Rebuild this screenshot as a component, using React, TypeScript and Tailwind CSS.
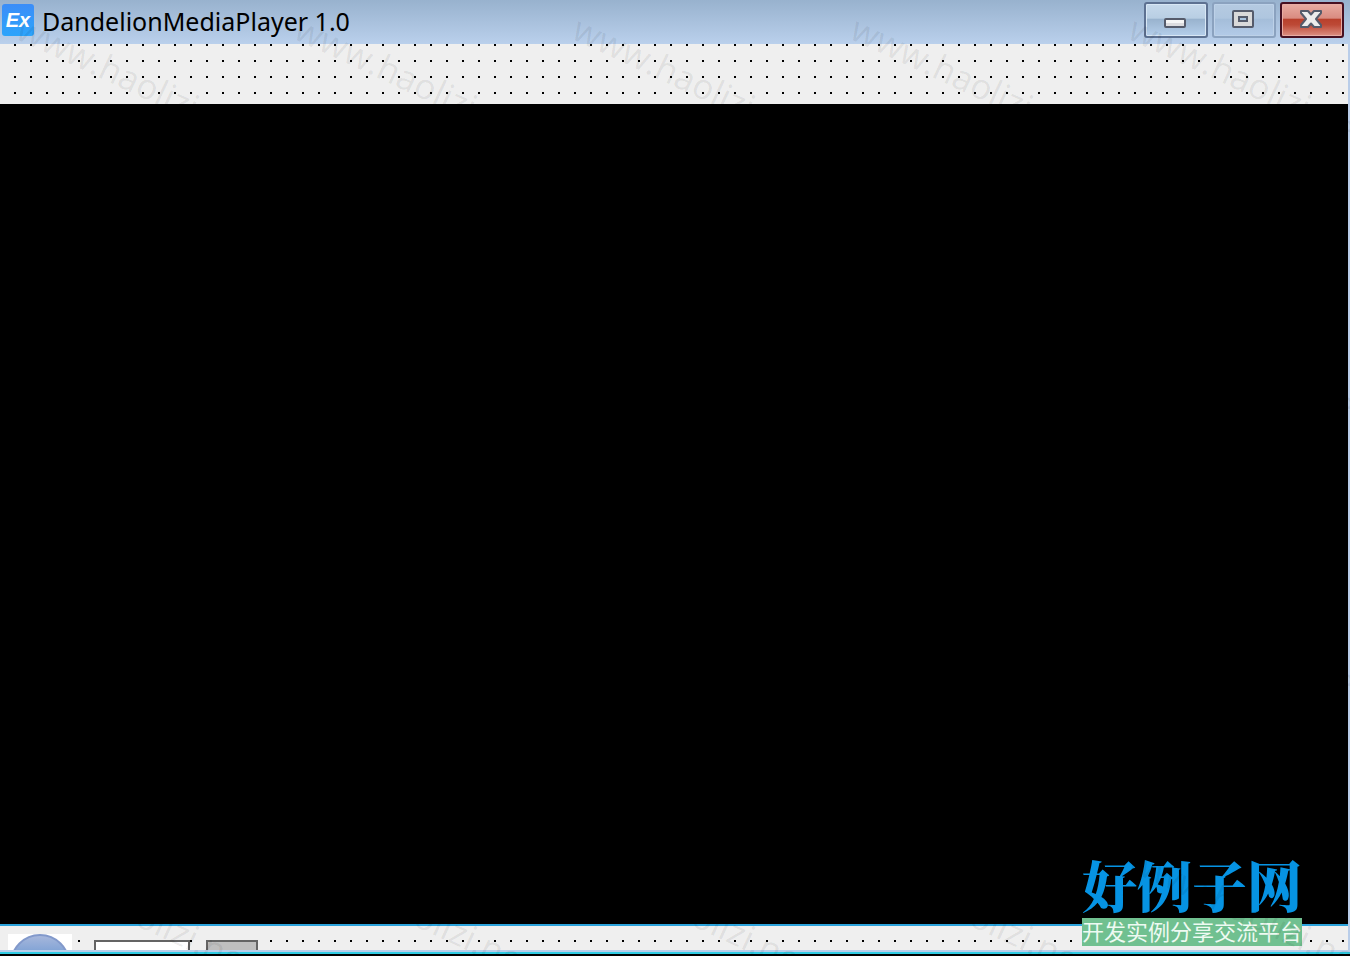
import React from "react";

function DotGrid({ y }: { y: number }) {
  return (
    <svg className="absolute inset-0 h-full w-full" aria-hidden="true" shapeRendering="crispEdges">
      <defs>
        <pattern id={`dots-${y}`} x="14" y={y} width="16" height="16" patternUnits="userSpaceOnUse">
          <rect width="2" height="2" fill="#000" />
        </pattern>
      </defs>
      <rect width="100%" height="100%" fill={`url(#dots-${y})`} />
    </svg>
  );
}

function AppIcon() {
  return (
    <span className="flex size-8 shrink-0 items-center justify-center rounded-[3px] bg-linear-to-b from-[#3b8df8] to-[#2ba4fb] font-['Liberation_Sans',sans-serif] text-[20px] leading-8 font-bold text-white italic">
      Ex
    </span>
  );
}

function TitleBar() {
  return (
    <header className="flex h-11 shrink-0 items-start justify-between bg-linear-to-b from-[#98b2ce] to-[#bad0ec] pr-1.5 pl-0.5">
      <div className="flex items-start gap-2 pt-1">
        <AppIcon />
        <h1 className="font-['Noto_Sans','Open_Sans',sans-serif] text-[25px] leading-[34px] whitespace-nowrap text-black">
          DandelionMediaPlayer 1.0
        </h1>
      </div>
      <div className="flex gap-1 pt-0.5">
        <button
          type="button"
          aria-label="Minimize"
          className="h-9 w-16 rounded-[3px] border-2 border-[#5d7191] bg-[linear-gradient(#c6d9eb,#b8cee3_45%,#98b2cd_46%,#b5cfeb)] shadow-[inset_0_0_0_1px_#d8e7f5]"
        >
          <svg viewBox="0 0 60 32" className="h-8 w-15" aria-hidden="true">
            <rect x="19" y="15" width="20" height="8" rx="1" fill="#f5f5f5" stroke="#555b6b" strokeWidth="2" />
            <rect x="20" y="19" width="18" height="3" fill="#dcdcdf" />
          </svg>
        </button>
        <button
          type="button"
          aria-label="Maximize"
          className="h-9 w-16 rounded-[3px] border-2 border-[#8ba2bf] bg-[linear-gradient(#b5cae1,#afc6df_45%,#a4bdd9_46%,#b3cbe8)] shadow-[inset_0_0_0_1px_#bdd1e8]"
        >
          <svg viewBox="0 0 60 32" className="h-8 w-15" aria-hidden="true">
            <rect x="19" y="7" width="20" height="16" rx="1" fill="#d9d9d9" stroke="#555b6b" strokeWidth="2" />
            <rect x="25" y="13" width="8" height="4" fill="#a9c4df" stroke="#555b6b" strokeWidth="2" />
          </svg>
        </button>
        <button
          type="button"
          aria-label="Close"
          className="h-9 w-16 rounded-[3px] border-2 border-[#471021] bg-[linear-gradient(#e8aca2,#d98b80_45%,#b83f2b_46%,#bd4936_65%,#dd9083)] shadow-[inset_0_0_0_1px_#e8aca4]"
        >
          <svg viewBox="0 0 60 32" className="h-8 w-15" aria-hidden="true">
            <path
              d="M19 7H26L29 10.5L32 7H39V9L34 15L39 21V23H32L29 19.5L26 23H19V21L24 15L19 9Z"
              fill="#ececec"
              stroke="#555b6b"
              strokeWidth="2"
              strokeLinejoin="round"
            />
          </svg>
        </button>
      </div>
    </header>
  );
}

function Controls() {
  return (
    <footer className="relative h-[26px] shrink-0 overflow-hidden border-t-2 border-[#2ba3dc] bg-[#efefef]">
      <DotGrid y={14} />
      <div className="relative flex items-start pl-2">
        <button type="button" aria-label="Play" className="mt-2 size-16 shrink-0 bg-white">
          <svg viewBox="0 0 64 64" className="size-16" aria-hidden="true">
            <defs>
              <linearGradient id="orb" x1="0" y1="0" x2="0" y2="1">
                <stop offset="0" stopColor="#a9b8dc" />
                <stop offset="0.25" stopColor="#86a6d6" />
                <stop offset="1" stopColor="#6b94cf" />
              </linearGradient>
            </defs>
            <circle cx="32" cy="30" r="29" fill="url(#orb)" stroke="#8299cb" strokeWidth="2" />
            <path d="M26 18L44 30L26 42Z" fill="#fff" />
          </svg>
        </button>
        <input
          type="text"
          aria-label="Media"
          className="mt-3.5 ml-[22px] h-10 w-24 border-2 border-[#646464] bg-white outline-none"
        />
        <button
          type="button"
          aria-label="Browse"
          className="mt-3.5 ml-4 h-10 w-[52px] border-2 border-[#646464] bg-[#bfbfbf]"
        />
      </div>
    </footer>
  );
}

function SiteBadge() {
  return (
    <div className="absolute right-12 bottom-2.5 flex w-[220px] flex-col items-center">
      <div className="pb-1 font-['Noto_Serif_CJK_SC','Noto_Sans_CJK_SC',serif] text-[55px] leading-[60px] font-black whitespace-nowrap text-[#0693e3]">
        好例子网
      </div>
      <div className="flex h-7 w-full items-start justify-center bg-[#70c090] font-['Noto_Sans_CJK_SC',sans-serif] text-[22px] leading-6 whitespace-nowrap text-[#eefaf2]">
        开发实例分享交流平台
      </div>
    </div>
  );
}

function Watermark() {
  return (
    <div
      aria-hidden="true"
      className="pointer-events-none absolute inset-0 grid auto-rows-[277px] grid-cols-[repeat(5,278px)] overflow-hidden pt-2 pl-7 select-none"
    >
      {Array.from({ length: 20 }, (_, i) => (
        <span
          key={i}
          className="h-10 w-0 origin-top-left rotate-[25deg] font-['Open_Sans','Noto_Sans',sans-serif] text-[35px] leading-10 whitespace-nowrap text-black/8"
        >
          www.haolizi.net
        </span>
      ))}
    </div>
  );
}

export default function App() {
  return (
    <div className="relative flex h-screen w-full flex-col overflow-hidden bg-black">
      <TitleBar />
      <div className="flex min-h-0 flex-1 flex-col border-r-2 border-b-2 border-[#b9cde9]">
        <div className="relative h-15 shrink-0 bg-[#efefef]">
          <DotGrid y={0} />
        </div>
        <main className="min-h-0 flex-1 bg-black" />
        <Controls />
      </div>
      <div className="h-1 shrink-0 border-b-2 border-black bg-[#2fcbe3]" />
      <SiteBadge />
      <Watermark />
    </div>
  );
}
